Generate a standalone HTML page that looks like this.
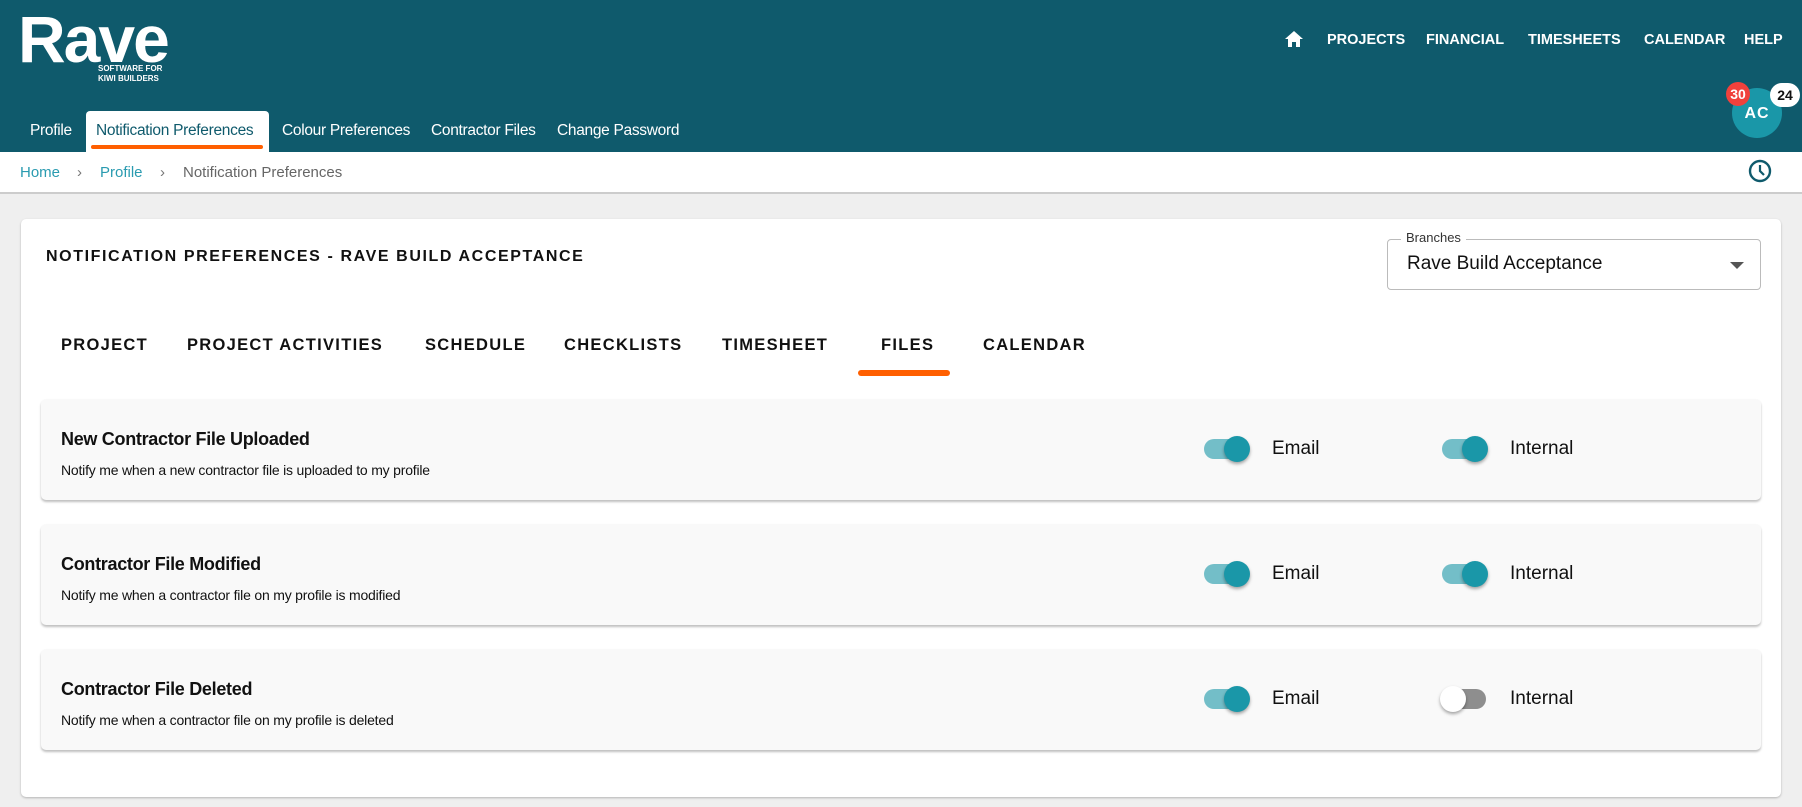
<!DOCTYPE html>
<html><head><meta charset="utf-8"><style>
*{box-sizing:border-box;margin:0;padding:0}
body{width:1802px;height:807px;overflow:hidden;background:#efefef;font-family:"Liberation Sans",sans-serif;position:relative;color:#111}
.abs{position:absolute;white-space:nowrap}
#hdr{position:absolute;left:0;top:0;width:1802px;height:152px;background:#0f5a6c}
.logo{left:18px;top:7px;font-size:66px;font-weight:bold;color:#fff;letter-spacing:-2px;line-height:64px}
.sub{left:98px;top:64px;font-size:8px;font-weight:bold;color:#fff;line-height:10px}
.nav{top:32px;font-size:14.5px;font-weight:bold;color:#fff}
.tab{top:122px;font-size:15.5px;color:#fff;letter-spacing:-0.3px}
#bc{position:absolute;left:0;top:152px;width:1802px;height:42px;background:#fff;border-bottom:2px solid #ccc}
.bc{top:164px;font-size:15px;color:#2a9bb0}
#card{position:absolute;left:21px;top:219px;width:1760px;height:578px;background:#fff;border-radius:5px;box-shadow:0 1px 2px rgba(0,0,0,.25)}
.ptab{top:336px;font-size:16.5px;font-weight:bold;letter-spacing:1.3px;color:#111}
.row{position:absolute;left:41px;width:1720px;height:101px;background:#f9f9f9;border-radius:5px;box-shadow:0 2px 2px rgba(0,0,0,.25)}
.rt{font-size:18px;font-weight:bold;left:20px;top:30px;letter-spacing:-0.3px}
.rs{font-size:14px;left:20px;top:63px;letter-spacing:-0.2px}
.tr{position:absolute;width:44px;height:20px;border-radius:10px;background:#73bec8}
.kn{position:absolute;width:26px;height:26px;border-radius:50%;background:#1a97a8;top:-3px;left:20px;box-shadow:0 2px 3px rgba(0,0,0,.35)}
.off{background:#8e8e8e}.off .kn{background:#fff;left:-2px}
.lb{position:absolute;font-size:19px;color:#111}
</style></head><body>
<div id="hdr"></div>
<div class="abs logo">Rave</div>
<div class="abs sub">SOFTWARE FOR<br>KIWI BUILDERS</div>
<svg class="abs" style="left:1285px;top:31px" width="18" height="16" viewBox="0 0 18 16"><path d="M9 0 L18 8 H15 V16 H11 V11 H7 V16 H3 V8 H0 Z" fill="#fff"/></svg>
<div class="abs nav" style="left:1327px">PROJECTS</div>
<div class="abs nav" style="left:1426px">FINANCIAL</div>
<div class="abs nav" style="left:1528px">TIMESHEETS</div>
<div class="abs nav" style="left:1644px">CALENDAR</div>
<div class="abs nav" style="left:1744px">HELP</div>
<div class="abs" style="left:1732px;top:88px;width:50px;height:50px;border-radius:50%;background:#1a97a8;color:#fff;font-weight:bold;font-size:16px;text-align:center;line-height:52px;letter-spacing:1px">AC</div>
<div class="abs" style="left:1726px;top:82px;width:24px;height:24px;border-radius:50%;background:#f0413c;color:#fff;font-weight:bold;font-size:14px;text-align:center;line-height:24px">30</div>
<div class="abs" style="left:1770px;top:83px;width:30px;height:24px;border-radius:12px;background:#fff;color:#111;font-weight:bold;font-size:14px;text-align:center;line-height:24px">24</div>
<div class="abs" style="left:86px;top:111px;width:183px;height:42px;background:#fff;border-radius:4px 4px 0 0"></div>
<div class="abs" style="left:91px;top:145px;width:172px;height:4px;background:#ff5f00;border-radius:2px"></div>
<div class="abs tab" style="left:30px">Profile</div>
<div class="abs tab" style="left:96px;color:#0f5a6c">Notification Preferences</div>
<div class="abs tab" style="left:282px">Colour Preferences</div>
<div class="abs tab" style="left:431px">Contractor Files</div>
<div class="abs tab" style="left:557px">Change Password</div>
<div id="bc"></div>
<div class="abs bc" style="left:20px">Home</div>
<div class="abs bc" style="left:77px;color:#777">›</div>
<div class="abs bc" style="left:100px">Profile</div>
<div class="abs bc" style="left:160px;color:#777">›</div>
<div class="abs bc" style="left:183px;color:#666">Notification Preferences</div>
<svg class="abs" style="left:1748px;top:159px" width="24" height="24" viewBox="0 0 24 24"><circle cx="12" cy="12" r="10" fill="none" stroke="#0f5a6c" stroke-width="2.4"/><path d="M12 6 V12 L16 16" fill="none" stroke="#0f5a6c" stroke-width="2.2"/></svg>
<div id="card"></div>
<div class="abs" style="left:46px;top:248px;font-size:16px;font-weight:bold;letter-spacing:1.6px">NOTIFICATION PREFERENCES - RAVE BUILD ACCEPTANCE</div>
<div class="abs" style="left:1387px;top:239px;width:374px;height:51px;border:1px solid #bbb;border-radius:4px"></div>
<div class="abs" style="left:1401px;top:230px;padding:0 5px;background:#fff;font-size:13px;color:#333">Branches</div>
<div class="abs" style="left:1407px;top:253px;font-size:19px">Rave Build Acceptance</div>
<svg class="abs" style="left:1730px;top:262px" width="14" height="8"><path d="M0 0H14L7 7Z" fill="#555"/></svg>
<div class="abs ptab" style="left:61px">PROJECT</div>
<div class="abs ptab" style="left:187px">PROJECT ACTIVITIES</div>
<div class="abs ptab" style="left:425px">SCHEDULE</div>
<div class="abs ptab" style="left:564px">CHECKLISTS</div>
<div class="abs ptab" style="left:722px">TIMESHEET</div>
<div class="abs ptab" style="left:881px">FILES</div>
<div class="abs ptab" style="left:983px">CALENDAR</div>
<div class="abs" style="left:858px;top:370px;width:92px;height:6px;background:#ff5f00;border-radius:3px"></div>

<div class="row" style="top:399px"><div class="abs rt">New Contractor File Uploaded</div><div class="abs rs">Notify me when a new contractor file is uploaded to my profile</div>
<div class="tr" style="left:1163px;top:40px"><div class="kn"></div></div><div class="lb" style="left:1231px;top:39px">Email</div>
<div class="tr" style="left:1401px;top:40px"><div class="kn"></div></div><div class="lb" style="left:1469px;top:39px">Internal</div></div>

<div class="row" style="top:524px"><div class="abs rt">Contractor File Modified</div><div class="abs rs">Notify me when a contractor file on my profile is modified</div>
<div class="tr" style="left:1163px;top:40px"><div class="kn"></div></div><div class="lb" style="left:1231px;top:39px">Email</div>
<div class="tr" style="left:1401px;top:40px"><div class="kn"></div></div><div class="lb" style="left:1469px;top:39px">Internal</div></div>

<div class="row" style="top:649px"><div class="abs rt">Contractor File Deleted</div><div class="abs rs">Notify me when a contractor file on my profile is deleted</div>
<div class="tr" style="left:1163px;top:40px"><div class="kn"></div></div><div class="lb" style="left:1231px;top:39px">Email</div>
<div class="tr off" style="left:1401px;top:40px"><div class="kn"></div></div><div class="lb" style="left:1469px;top:39px">Internal</div></div>
</body></html>
